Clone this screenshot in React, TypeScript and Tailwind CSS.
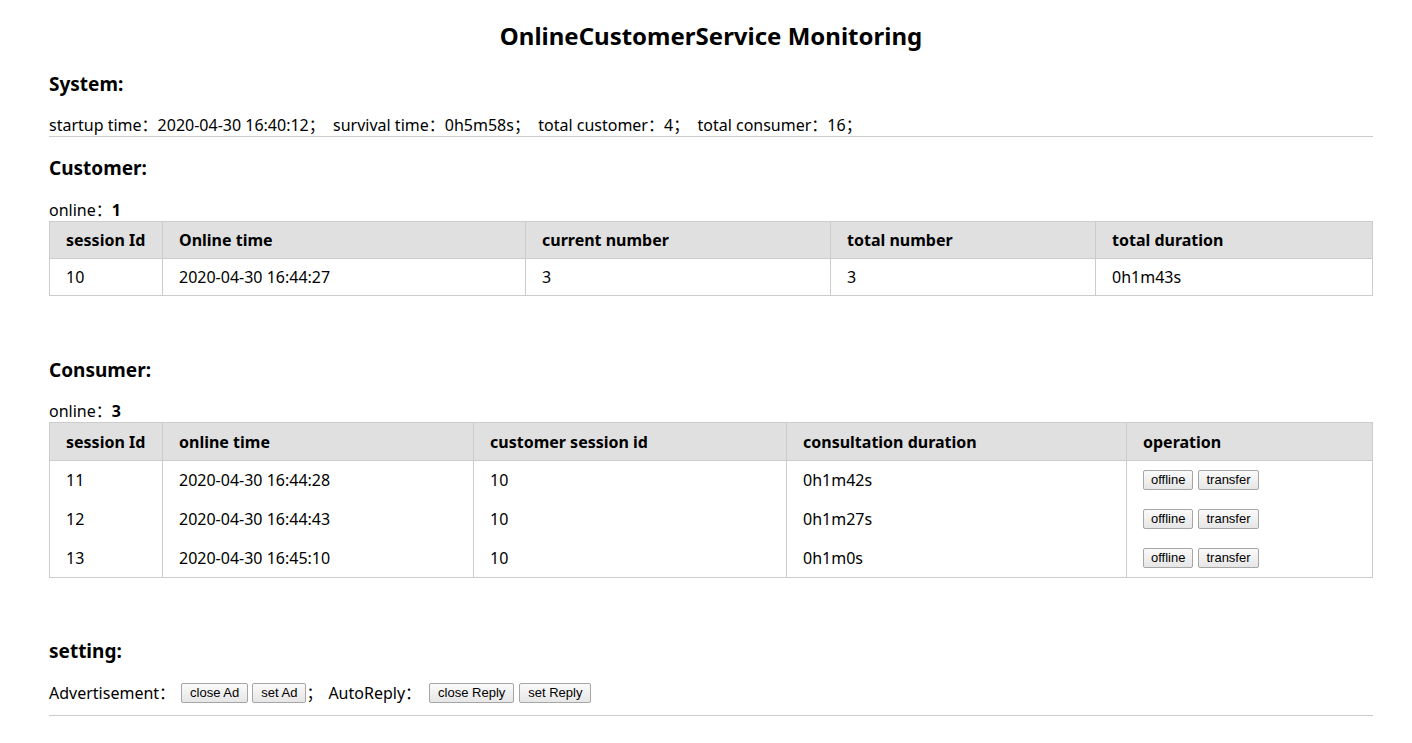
import React from 'react';

const customers = [
  { id: '10', time: '2020-04-30 16:44:27', current: '3', total: '3', duration: '0h1m43s' },
];

const consumers = [
  { id: '11', time: '2020-04-30 16:44:28', customer: '10', duration: '0h1m42s' },
  { id: '12', time: '2020-04-30 16:44:43', customer: '10', duration: '0h1m27s' },
  { id: '13', time: '2020-04-30 16:45:10', customer: '10', duration: '0h1m0s' },
];

const font = "font-['Noto_Sans','Noto_Sans_CJK_SC',sans-serif]";

const SmallButton: React.FC<{ label: string; wide?: boolean }> = ({ label, wide }) => (
  <button
    type="button"
    className={`h-[20px] ${wide ? 'px-[8px]' : 'px-[7px]'} border border-[#a6a6a6] rounded-[2px] bg-gradient-to-b from-[#fafafa] to-[#e6e6e6] text-[13px] leading-[18px] text-black font-['Liberation_Sans',Arial,sans-serif]`}
  >
    {label}
  </button>
);

const th = 'text-left font-bold px-[16px] border border-[#cccccc]';
const td = 'text-left px-[16px] border-x border-[#cccccc]';

export default function App() {
  return (
    <div className={`${font} text-[16px] text-black bg-white min-h-[743px]`}>
      <div className="pl-[49px] w-[1373px]">
        <h1 className="pt-[18px] text-center text-[24px] font-bold leading-[36px]">
          OnlineCustomerService Monitoring
        </h1>

        <h2 className="mt-[16px] text-[19px] font-bold leading-[28px]">System:</h2>
        <div className="mt-[17px] leading-[20px] pb-[1px] border-b border-[#cccccc]">
          startup time：2020-04-30 16:40:12；&nbsp; survival time：0h5m58s；&nbsp; total customer：4；&nbsp; total consumer：16；
        </div>

        <h2 className="mt-[17px] text-[19px] font-bold leading-[28px]">Customer:</h2>
        <div className="mt-[18px] leading-[20px]">
          online：<span className="font-bold">1</span>
        </div>
        <table className="mt-[1px] w-full border-collapse border border-[#cccccc]">
          <thead>
            <tr className="bg-[#e0e0e0] h-[37px]">
              <th className={`${th} w-[113px]`}>session Id</th>
              <th className={`${th} w-[363px]`}>Online time</th>
              <th className={`${th} w-[305px]`}>current number</th>
              <th className={`${th} w-[265px]`}>total number</th>
              <th className={th}>total duration</th>
            </tr>
          </thead>
          <tbody>
            {customers.map((c) => (
              <tr key={c.id} className="h-[37px]">
                <td className={td}>{c.id}</td>
                <td className={td}>{c.time}</td>
                <td className={td}>{c.current}</td>
                <td className={td}>{c.total}</td>
                <td className={td}>{c.duration}</td>
              </tr>
            ))}
          </tbody>
        </table>

        <h2 className="mt-[60px] text-[19px] font-bold leading-[28px]">Consumer:</h2>
        <div className="mt-[17px] leading-[20px]">
          online：<span className="font-bold">3</span>
        </div>
        <table className="mt-[1px] w-full border-collapse border border-[#cccccc]">
          <thead>
            <tr className="bg-[#e0e0e0] h-[38px]">
              <th className={`${th} w-[113px]`}>session Id</th>
              <th className={`${th} w-[311px]`}>online time</th>
              <th className={`${th} w-[313px]`}>customer session id</th>
              <th className={`${th} w-[340px]`}>consultation duration</th>
              <th className={th}>operation</th>
            </tr>
          </thead>
          <tbody>
            {consumers.map((c) => (
              <tr key={c.id} className="h-[39px]">
                <td className={td}>{c.id}</td>
                <td className={td}>{c.time}</td>
                <td className={td}>{c.customer}</td>
                <td className={td}>{c.duration}</td>
                <td className={td}>
                  <div className="flex gap-[5px]">
                    <SmallButton label="offline" />
                    <SmallButton label="transfer" />
                  </div>
                </td>
              </tr>
            ))}
          </tbody>
        </table>

        <h2 className="mt-[59px] text-[19px] font-bold leading-[28px]">setting:</h2>
        <div className="mt-[16px] pb-[10px] border-b border-[#cccccc] flex items-center leading-[24px]">
          <span>Advertisement：</span>
          <span className="ml-[6px] flex gap-[4px]">
            <SmallButton label="close Ad" wide />
            <SmallButton label="set Ad" wide />
          </span>
          <span>；</span>
          <span className="ml-[6px]">AutoReply：</span>
          <span className="ml-[8px] flex gap-[5px]">
            <SmallButton label="close Reply" wide />
            <SmallButton label="set Reply" wide />
          </span>
        </div>
      </div>
    </div>
  );
}
